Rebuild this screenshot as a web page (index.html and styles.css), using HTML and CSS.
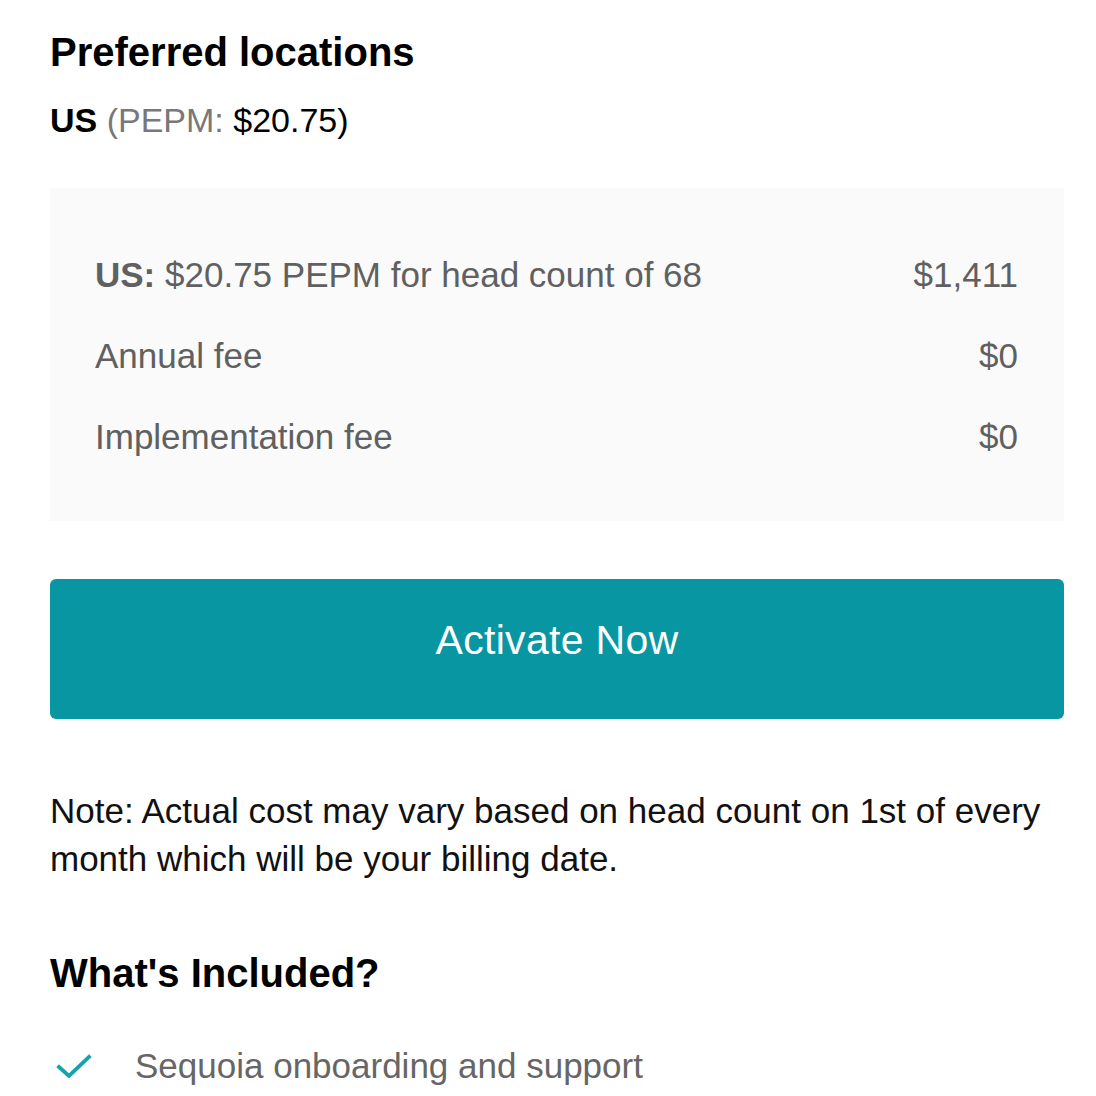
FILE: index.html
```html
<!DOCTYPE html>
<html>
<head>
<meta charset="utf-8">
<link rel="stylesheet" href="styles.css">
</head>
<body>
<main class="page">
  <h1 class="title">Preferred locations</h1>
  <p class="subtitle"><strong>US</strong> <span class="muted">(PEPM:</span> $20.75)</p>
  <section class="summary">
    <div class="row"><span><strong>US:</strong> $20.75 PEPM for head count of 68</span><span>$1,411</span></div>
    <div class="row"><span>Annual fee</span><span>$0</span></div>
    <div class="row"><span>Implementation fee</span><span>$0</span></div>
  </section>
  <button class="activate">Activate Now</button>
  <p class="note">Note: Actual cost may vary based on head count on 1st of every month which will be your billing date.</p>
  <h2 class="title2">What's Included?</h2>
  <ul class="included">
    <li class="item">
      <svg class="check" viewBox="0 0 36 28" width="36" height="28"><path d="M3 15 L13 24 L33 5" fill="none" stroke="#17a3ad" stroke-width="3.8" stroke-linecap="square"/></svg>
      <span>Sequoia onboarding and support</span>
    </li>
  </ul>
</main>
</body>
</html>
```
FILE: styles.css
```css
html, body {
  margin: 0;
  padding: 0;
  background: #ffffff;
}
body {
  font-family: "Liberation Sans", Arial, sans-serif;
  color: #000;
}
.page {
  padding: 0 32px 0 50px;
  display: flex;
  flex-direction: column;
}
.title {
  margin: 28px 0 0;
  font-size: 40px;
  line-height: 48px;
  font-weight: 700;
}
.subtitle {
  margin: 24px 0 0;
  font-size: 34px;
  line-height: 40px;
}
.subtitle strong { font-weight: 700; }
.muted { color: #787878; }
.summary {
  margin-top: 48px;
  background: #fafafa;
  padding: 65px 46px 62px 45px;
  display: flex;
  flex-direction: column;
  gap: 37px;
  color: #606060;
}
.row {
  display: flex;
  justify-content: space-between;
  font-size: 35px;
  line-height: 44px;
}
.row strong { font-weight: 700; }
.activate {
  margin-top: 58px;
  height: 140px;
  padding: 0 0 18px;
  border: none;
  border-radius: 6px;
  background: #0897a2;
  color: #fff;
  font-family: "Liberation Sans", Arial, sans-serif;
  font-size: 41px;
  font-weight: 500;
  letter-spacing: 0.3px;
}
.note {
  margin: 68px 0 0;
  font-size: 35px;
  line-height: 48px;
  color: #111;
}
.title2 {
  margin: 68px 0 0;
  font-size: 40px;
  line-height: 44px;
  font-weight: 700;
}
.included {
  list-style: none;
  margin: 49px 0 0;
  padding: 0;
}
.item {
  display: flex;
  align-items: center;
  gap: 43px;
  padding-left: 6px;
  font-size: 35px;
  line-height: 44px;
  color: #666;
}
.check { flex: none; }
```
